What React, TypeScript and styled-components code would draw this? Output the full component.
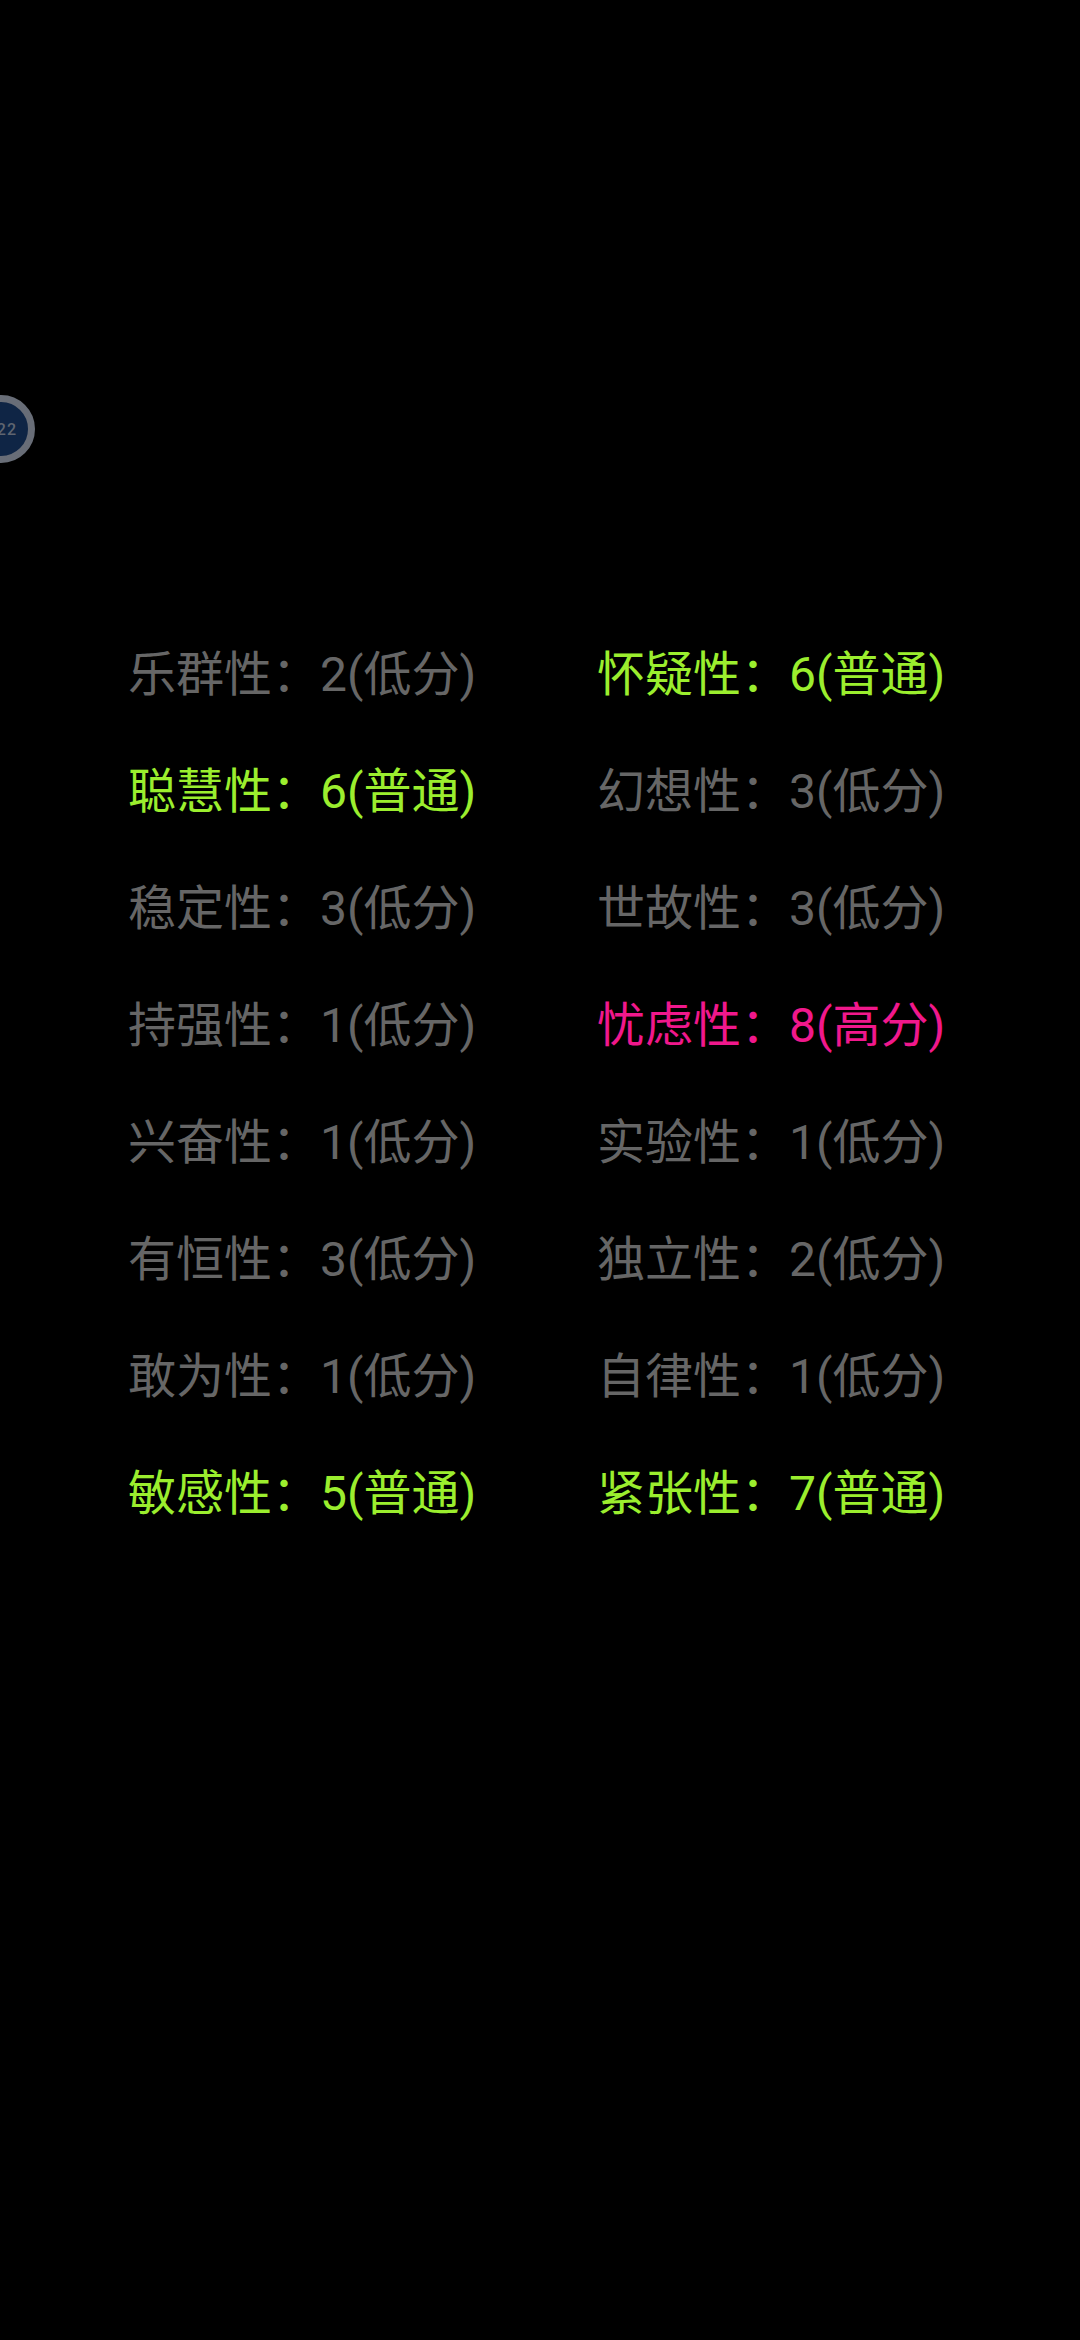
import React from 'react'
import styled, { createGlobalStyle } from 'styled-components'

type Level = 'low' | 'normal' | 'high'

interface Trait {
  name: string
  score: number
  level: Level
}

const levelLabels: Record<Level, string> = {
  low: '低分',
  normal: '普通',
  high: '高分'
}

const levelColors: Record<Level, string> = {
  low: '#666666',
  normal: '#9bee2e',
  high: '#f0188c'
}

const traits: Trait[] = [
  { name: '乐群性', score: 2, level: 'low' },
  { name: '怀疑性', score: 6, level: 'normal' },
  { name: '聪慧性', score: 6, level: 'normal' },
  { name: '幻想性', score: 3, level: 'low' },
  { name: '稳定性', score: 3, level: 'low' },
  { name: '世故性', score: 3, level: 'low' },
  { name: '持强性', score: 1, level: 'low' },
  { name: '忧虑性', score: 8, level: 'high' },
  { name: '兴奋性', score: 1, level: 'low' },
  { name: '实验性', score: 1, level: 'low' },
  { name: '有恒性', score: 3, level: 'low' },
  { name: '独立性', score: 2, level: 'low' },
  { name: '敢为性', score: 1, level: 'low' },
  { name: '自律性', score: 1, level: 'low' },
  { name: '敏感性', score: 5, level: 'normal' },
  { name: '紧张性', score: 7, level: 'normal' }
]

const GlobalStyle = createGlobalStyle`
  html, body {
    margin: 0;
    padding: 0;
    background: #000;
  }
`

const Screen = styled.div`
  position: relative;
  width: 1080px;
  height: 2340px;
  overflow: hidden;
  background: #000;
  padding: 616px 0 0 128px;
  box-sizing: border-box;
  font-family: 'Roboto', 'Noto Sans CJK SC', sans-serif;
`

const Grid = styled.div`
  display: grid;
  grid-template-columns: 469px 469px;
  grid-auto-rows: 117px;
`

const Row = styled.div<{ $level: Level }>`
  font-size: 48px;
  line-height: 117px;
  white-space: nowrap;
  color: ${p => levelColors[p.$level]};
`

const FloatBall = styled.div`
  position: absolute;
  left: -33px;
  top: 395px;
  width: 68px;
  height: 68px;
  box-sizing: border-box;
  border: 7px solid #686d77;
  border-radius: 50%;
  background: #0f2545;
  display: flex;
  align-items: center;
  justify-content: flex-end;
  padding-right: 11px;
  color: #5f6570;
  font-size: 16px;
  font-weight: 500;
  letter-spacing: 1px;
  font-family: 'Roboto', sans-serif;
`

export default function App() {
  return (
    <Screen>
      <GlobalStyle />
      <FloatBall>22</FloatBall>
      <Grid>
        {traits.map(t => (
          <Row key={t.name} $level={t.level}>
            {t.name}：{t.score}({levelLabels[t.level]})
          </Row>
        ))}
      </Grid>
    </Screen>
  )
}
